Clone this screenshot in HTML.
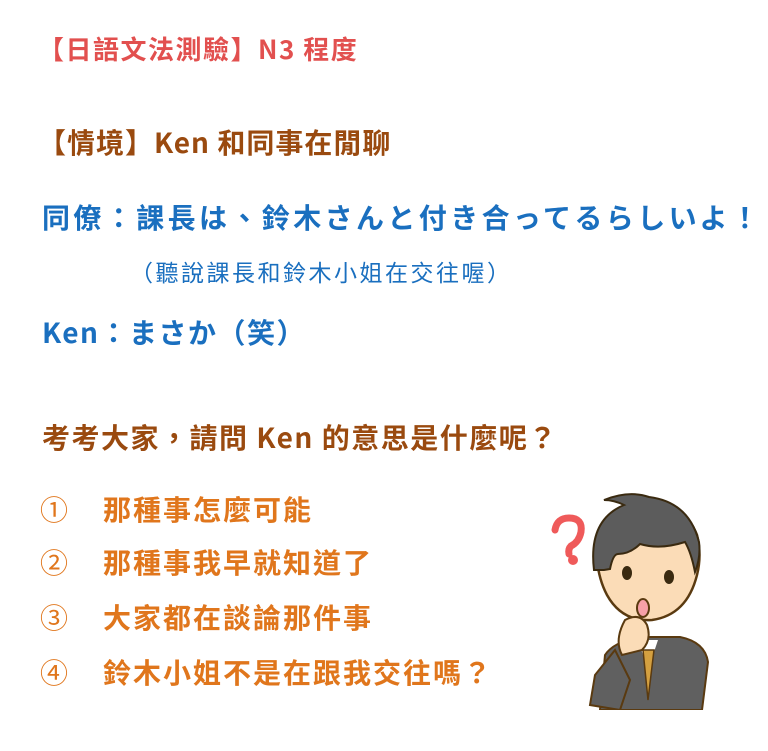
<!DOCTYPE html>
<html><head><meta charset="utf-8"><style>
body{margin:0;width:768px;height:751px;background:#fff;position:relative;overflow:hidden;font-family:"Noto Sans CJK TC","Liberation Sans",sans-serif;font-weight:bold;}
.l{position:absolute;left:42px;white-space:nowrap;line-height:1;font-size:28px}
.red{color:#e2504f}.br{color:#9a4a0f}.bl{color:#1a6fbf}.or{color:#e0761c}
.num{position:absolute;left:40px;font-weight:normal;font-size:28px;line-height:1}
</style></head><body>
<div class="l red" style="top:36px;font-size:26px;letter-spacing:1.5px;left:38px">【日語文法測驗】N3 程度</div>
<div class="l br" style="top:128px;letter-spacing:1px;left:38px">【情境】Ken 和同事在閒聊</div>
<div class="l bl" style="top:203px;letter-spacing:3.4px">同僚：課長は、鈴木さんと付き合ってるらしいよ！</div>
<div class="l bl" style="top:260px;left:130px;font-size:23px;font-weight:normal;letter-spacing:2.5px">（聽說課長和鈴木小姐在交往喔）</div>
<div class="l bl" style="top:318px;letter-spacing:1.5px">Ken：まさか（笑）</div>
<div class="l br" style="top:423px;letter-spacing:1.5px">考考大家，請問 Ken 的意思是什麼呢？</div>
<div class="num or" style="top:495px">①</div><div class="l or" style="left:103px;top:495px;letter-spacing:2px">那種事怎麼可能</div>
<div class="num or" style="top:548px">②</div><div class="l or" style="left:103px;top:548px;letter-spacing:2px">那種事我早就知道了</div>
<div class="num or" style="top:603px">③</div><div class="l or" style="left:103px;top:603px;letter-spacing:2px">大家都在談論那件事</div>
<div class="num or" style="top:658px">④</div><div class="l or" style="left:103px;top:658px;letter-spacing:2px">鈴木小姐不是在跟我交往嗎？</div>
<svg style="position:absolute;left:530px;top:480px" width="200" height="230" viewBox="0 0 200 230">
<path d="M25 50 q2-12 14-12 q14 0 12 14 q-2 10-10 14 q-3 3-2 8" fill="none" stroke="#ef5a5a" stroke-width="7" stroke-linecap="round"/>
<circle cx="43" cy="80" r="5" fill="#ef5a5a"/>
<path d="M70 230 L75 175 q10-15 40-18 l35 0 q25 5 28 25 L172 230Z" fill="#606060" stroke="#5a3a10" stroke-width="2"/>
<path d="M108 160 l10 30 l10-30Z" fill="#fff"/>
<path d="M113 170 l5 50 l6-50Z" fill="#d4a040" stroke="#5a3a10" stroke-width="1.5"/>
<path d="M67 80 q-2-45 40-55 q45-8 60 30 q5 20 0 40 q-10 40-45 45 q-30 2-45-25 q-8-15-10-35Z" fill="#fbdcb7" stroke="#5a3a10" stroke-width="2.5"/>
<path d="M64 90 q-6-50 30-65 q-10-5-20-5 q25-10 45-3 q40 5 50 45 q2 15-4 30 q-4-20-10-30 q-25 8-45 2 q-10 10-22 10 q-5 0-8 15 l-6 1Z" fill="#5c5c5c" stroke="#3a2a10" stroke-width="2"/>
<ellipse cx="97" cy="93" rx="5" ry="7" fill="#3a2a10"/><ellipse cx="139" cy="97" rx="5" ry="7" fill="#3a2a10"/>
<ellipse cx="113" cy="128" rx="6" ry="9" fill="#f6a0a8" stroke="#5a3a10" stroke-width="2"/>
<path d="M95 140 q15-8 22 5 q5 15-5 25 l-20 5 q-8-15 3-35Z" fill="#fbdcb7" stroke="#5a3a10" stroke-width="2"/>
<path d="M85 170 l-20 25 l-5 30 l30 5 l10-30Z" fill="#606060" stroke="#5a3a10" stroke-width="2"/>
</svg>
</body></html>
